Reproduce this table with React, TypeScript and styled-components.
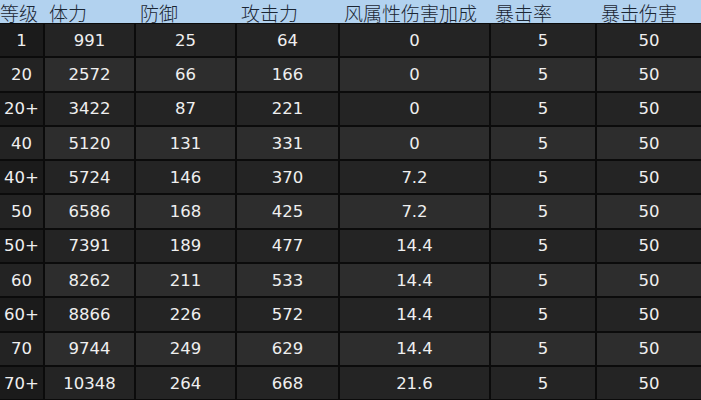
import React from 'react';
import styled, { createGlobalStyle } from 'styled-components';

const GlobalStyle = createGlobalStyle`
  html, body {
    margin: 0;
    padding: 0;
    background: #0b0b0b;
  }
  body {
    width: 701px;
    height: 400px;
    overflow: hidden;
  }
`;

const COLUMNS = '43px 89px 99px 101px 149px 104px 104px';

const Sheet = styled.div`
  width: 701px;
  display: flex;
  flex-direction: column;
`;

const HeaderRow = styled.div`
  display: grid;
  grid-template-columns: ${COLUMNS};
  column-gap: 2px;
  height: 23px;
  background: #b2d2ef;
`;

const HeaderCell = styled.div<{ $first?: boolean }>`
  display: flex;
  align-items: center;
  font-family: "Noto Sans CJK SC", "Noto Sans", sans-serif;
  font-size: 19px;
  font-weight: 300;
  line-height: 1;
  color: #1b2633;
  white-space: nowrap;
  padding-left: ${p => (p.$first ? 0 : 4)}px;
  padding-top: 1px;
`;

const Body = styled.div`
  display: grid;
  grid-template-columns: ${COLUMNS};
  grid-auto-rows: 32.3px;
  gap: 2px;
  padding-top: 1px;
  background: #0b0b0b;
`;

const Cell = styled.div<{ $alt: boolean; $first?: boolean }>`
  display: flex;
  align-items: center;
  justify-content: center;
  font-family: "DejaVu Sans", "Noto Sans", sans-serif;
  font-size: 16.5px;
  color: #efefef;
  background: ${p =>
    p.$first
      ? p.$alt ? '#232323' : '#1b1b1b'
      : p.$alt ? '#2d2d2d' : '#242424'};
`;

const headers = ['等级', '体力', '防御', '攻击力', '风属性伤害加成', '暴击率', '暴击伤害'];

const rows: (string | number)[][] = [
  ['1', 991, 25, 64, 0, 5, 50],
  ['20', 2572, 66, 166, 0, 5, 50],
  ['20+', 3422, 87, 221, 0, 5, 50],
  ['40', 5120, 131, 331, 0, 5, 50],
  ['40+', 5724, 146, 370, '7.2', 5, 50],
  ['50', 6586, 168, 425, '7.2', 5, 50],
  ['50+', 7391, 189, 477, '14.4', 5, 50],
  ['60', 8262, 211, 533, '14.4', 5, 50],
  ['60+', 8866, 226, 572, '14.4', 5, 50],
  ['70', 9744, 249, 629, '14.4', 5, 50],
  ['70+', 10348, 264, 668, '21.6', 5, 50],
];

export default function App() {
  return (
    <>
      <GlobalStyle />
      <Sheet>
        <HeaderRow>
          {headers.map((h, i) => (
            <HeaderCell key={h} $first={i === 0}>{h}</HeaderCell>
          ))}
        </HeaderRow>
        <Body>
          {rows.map((row, r) =>
            row.map((v, c) => (
              <Cell key={`${r}-${c}`} $alt={r % 2 === 1} $first={c === 0}>
                {v}
              </Cell>
            ))
          )}
        </Body>
      </Sheet>
    </>
  );
}
